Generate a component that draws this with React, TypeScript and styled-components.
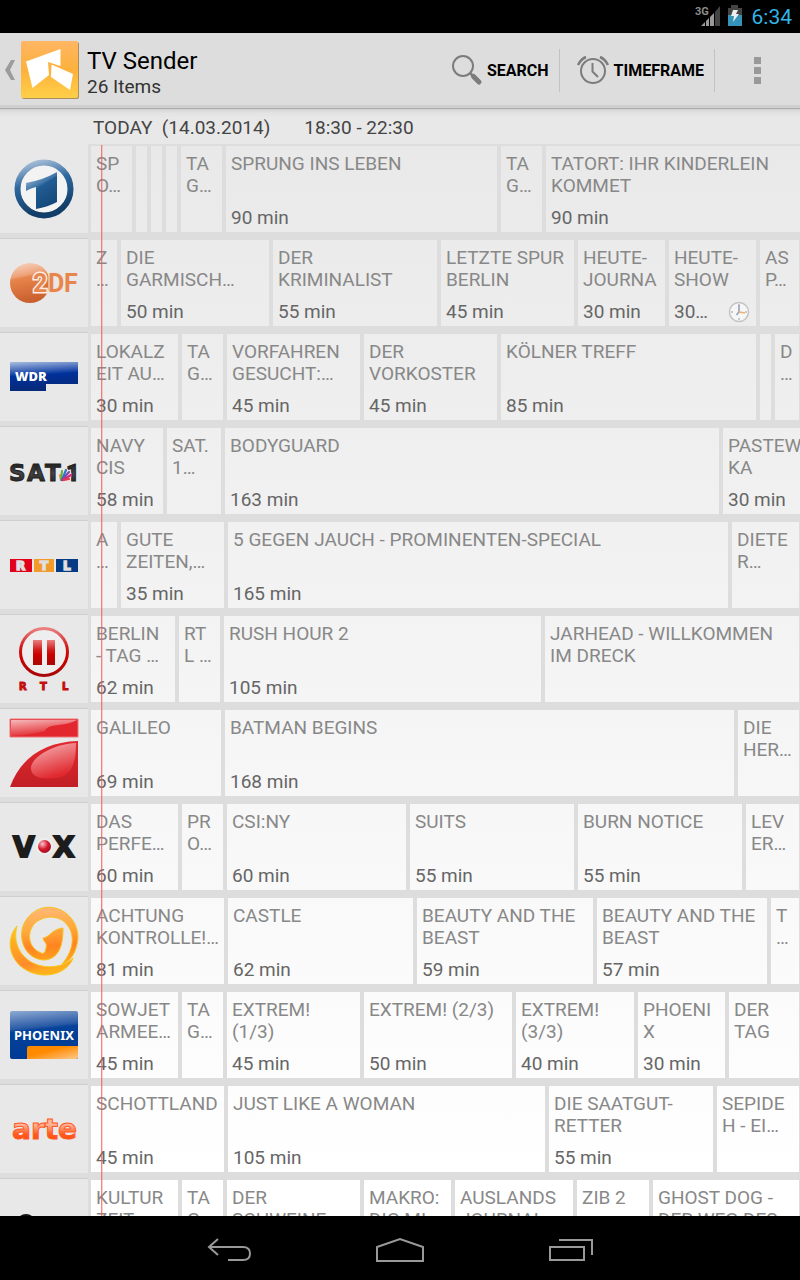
import React from "react";
import styled, { createGlobalStyle } from "styled-components";

const GlobalStyle = createGlobalStyle`
  * { box-sizing: border-box; }
  body { margin: 0; background: #000; font-family: Roboto, "Liberation Sans", sans-serif; }
  button { font: inherit; color: inherit; background: none; border: 0; margin: 0; padding: 0; }
  svg { display: block; flex: none; }
`;

const Screen = styled.div`
  display: flex;
  flex-direction: column;
  height: 100vh;
  overflow: hidden;
`;

const StatusBar = styled.div`
  display: flex;
  flex: none;
  align-items: center;
  justify-content: flex-end;
  height: 33px;
  padding-right: 8px;
  background: #000;
`;

const StatusTime = styled.span`
  margin-left: 9px;
  color: #33b5e5;
  font-size: 21px;
  line-height: 33px;
  padding-top: 2px;
`;

const ActionBar = styled.header`
  display: flex;
  flex: none;
  align-items: center;
  height: 76px;
  padding-bottom: 2px;
  background: linear-gradient(#ddd 72px, #d0d0d0 72px, #d0d0d0 75px, #acacac 75px);
`;

const UpButton = styled.button`
  display: flex;
  align-items: center;
  gap: 6px;
  padding-left: 5px;
`;

const Heading = styled.div`
  flex: 1;
  padding: 5px 0 0 8px;
`;

const Title = styled.h1`
  margin: 0;
  color: #000;
  font-size: 24px;
  font-weight: 400;
  line-height: 28px;
`;

const Subtitle = styled.div`
  color: #333;
  font-size: 19px;
  line-height: 24px;
`;

const ActionButton = styled.button`
  display: flex;
  align-items: center;
  gap: 4px;
  height: 43px;
  padding: 0 10px 0 16px;
  border-right: 1px solid #c2c2c2;
  color: #000;
  font-size: 16px;
  font-weight: 700;
`;

const OverflowButton = styled.button`
  display: flex;
  flex-direction: column;
  align-items: center;
  gap: 3px;
  width: 85px;
`;

const OverflowDot = styled.span`
  width: 7px;
  height: 7px;
  background: #999;
`;

const Guide = styled.main`
  flex: 1;
  min-height: 0;
  overflow: hidden;
  background: #e8e8e8;
`;

const RangeBar = styled.div`
  display: flex;
  gap: 34px;
  height: 35px;
  padding-left: 93px;
  background: linear-gradient(#d2d2d2, #e3e3e3 4px, #e8e8e8 9px);
  color: #444;
  font-size: 19px;
  line-height: 37px;
  white-space: pre;
`;

const Channels = styled.div`
  position: relative;
  background: linear-gradient(#e9e9e9, #fff 1040px);
`;

const NowLine = styled.div`
  position: absolute;
  top: 1px;
  bottom: 0;
  left: 101px;
  width: 2px;
  background: linear-gradient(90deg, rgba(240, 80, 80, 0.7) 1px, rgba(240, 110, 110, 0.3) 1px);
`;

const ChannelRow = styled.section`
  display: flex;
  height: 94px;
  overflow: hidden;
`;

const ChannelLogo = styled.div<{ $first?: boolean }>`
  flex: none;
  width: 88px;
  border-top: 1px solid ${(p) => (p.$first ? "#e8e8e8" : "#cfcfcf")};
  border-bottom: 5px solid #ddd;
  background: #e8e8e8;
`;

const Programmes = styled.div`
  display: flex;
  flex: 1;
  min-width: 0;
  overflow: hidden;
  border: solid #ddd;
  border-width: 2px 0 6px 3px;
`;

const Programme = styled.article<{ $width: number }>`
  display: flex;
  flex: none;
  flex-direction: column;
  justify-content: space-between;
  width: ${(p) => p.$width + 4}px;
  padding: 7px 0 3px 5px;
  border-right: 4px solid #ddd;
  overflow: hidden;
  font-size: 19px;
  line-height: 22px;
  white-space: pre;
`;

const ProgrammeTitle = styled.div`
  color: #888;
`;

const ProgrammeFooter = styled.div`
  display: flex;
  justify-content: space-between;
  padding-right: 6px;
  color: #666;
`;

const NavBar = styled.nav`
  display: flex;
  flex: none;
  align-items: center;
  justify-content: center;
  gap: 123px;
  height: 64px;
  padding-top: 4px;
  background: #000;
`;

type Show = [width: number, title?: string, duration?: string, reminder?: boolean];
type Channel = { name: string; logo: React.ReactNode; shows: Show[] };

const Logo = ({ label, children }: { label: string; children: React.ReactNode }) => (
  <svg width="88" height="88" viewBox="0 0 88 88" role="img" aria-label={label}>
    {children}
  </svg>
);

const wide = { fontFamily: '"DejaVu Sans", sans-serif', fontWeight: 700 };

const ArdLogo = (
  <Logo label="Das Erste">
    <defs>
      <linearGradient id="ard" x1="0" y1="0" x2="0.25" y2="1">
        <stop offset="0" stopColor="#b4c8dc" />
        <stop offset="0.45" stopColor="#2d689f" />
        <stop offset="1" stopColor="#123d68" />
      </linearGradient>
      <linearGradient id="ardOne" x1="0" y1="0" x2="0.5" y2="1">
        <stop offset="0" stopColor="#c4d4e4" />
        <stop offset="0.45" stopColor="#3d74a6" />
        <stop offset="0.5" stopColor="#215c94" />
        <stop offset="1" stopColor="#164a7c" />
      </linearGradient>
    </defs>
    <circle cx="44" cy="44" r="26.5" fill="#f3f3f3" stroke="url(#ard)" strokeWidth="6" />
    <path d="M26 38Q43 35 57 27V57Q48 62 36 64V42Q31 43 26 46Z" fill="url(#ardOne)" />
  </Logo>
);

const ZdfLogo = (
  <Logo label="ZDF">
    <defs>
      <linearGradient id="zdf" x1="0" y1="0" x2="0.2" y2="1">
        <stop offset="0" stopColor="#f8d8c4" />
        <stop offset="0.36" stopColor="#eea27a" />
        <stop offset="0.42" stopColor="#e8854c" />
        <stop offset="1" stopColor="#c9602e" />
      </linearGradient>
    </defs>
    <circle cx="30" cy="44" r="20" fill="url(#zdf)" />
    <g fontFamily="Roboto, sans-serif" fontWeight="700" fontSize="25">
      <text x="33" y="53" fill="#e8854c" stroke="#f8ece4" strokeWidth="3" paintOrder="stroke">2</text>
      <text x="48" y="53" fill="#e8854c" stroke="#f2e4da" strokeWidth="2" paintOrder="stroke">D</text>
      <text x="64" y="53" fill="#e8854c">F</text>
    </g>
  </Logo>
);

const WdrLogo = (
  <Logo label="WDR">
    <defs>
      <linearGradient id="wdr" x1="0" y1="0" x2="0.15" y2="1">
        <stop offset="0" stopColor="#a9bde2" />
        <stop offset="0.42" stopColor="#1d49a8" />
        <stop offset="0.5" stopColor="#00309a" />
        <stop offset="1" stopColor="#062a78" />
      </linearGradient>
    </defs>
    <path d="M10 29H78V51H46V58H10Z" fill="url(#wdr)" />
    <text x="15" y="48" fill="#fff" fontFamily="Open Sans, sans-serif" fontWeight="800" fontSize="13">WDR</text>
  </Logo>
);

const SatLogo = (
  <Logo label="SAT.1">
    <defs>
      <linearGradient id="sat" x1="0" y1="0" x2="0" y2="1">
        <stop offset="0" stopColor="#111" />
        <stop offset="0.5" stopColor="#444" />
        <stop offset="1" stopColor="#1a1a1a" />
      </linearGradient>
    </defs>
    <g {...wide} fontSize="23" fill="url(#sat)" stroke="#222" strokeWidth="1">
      <text x="9" y="54">S</text>
      <text x="27" y="54">A</text>
      <text x="45" y="54">T</text>
      <text x="66" y="54" fontFamily="Roboto, sans-serif" fontWeight="900">1</text>
    </g>
    <circle cx="65" cy="48" r="6.5" fill="#f1e8ee" />
    <g strokeWidth="2.2" strokeLinecap="round">
      <path d="M61 53L60 48" stroke="#f2992c" />
      <path d="M61 53L62 44" stroke="#62b23c" />
      <path d="M62 53L66 43" stroke="#3178c0" />
      <path d="M62 53L69 45" stroke="#7a4bb0" />
      <path d="M63 53L71 48" stroke="#d02a7a" />
      <path d="M64 53L69 52" stroke="#e33b4c" />
    </g>
  </Logo>
);

const RtlLogo = (
  <Logo label="RTL">
    <rect x="10" y="38" width="22" height="13" fill="#e2001a" />
    <rect x="34" y="38" width="20" height="13" fill="#f39a2b" />
    <rect x="56" y="38" width="22" height="13" fill="#063a84" />
    <g {...wide} fontSize="12" fill="#eee" stroke="#ddd" strokeWidth="1.5">
      <text x="16" y="49">R</text>
      <text x="40" y="49">T</text>
      <text x="63" y="49">L</text>
    </g>
  </Logo>
);

const Rtl2Logo = (
  <Logo label="RTL II">
    <defs>
      <linearGradient id="rtl2" x1="0" y1="0" x2="0" y2="1">
        <stop offset="0" stopColor="#ea8080" />
        <stop offset="0.4" stopColor="#d01a1a" />
        <stop offset="0.6" stopColor="#cc0000" />
        <stop offset="1" stopColor="#a80808" />
      </linearGradient>
    </defs>
    <circle cx="44" cy="37" r="23.5" fill="#eee" stroke="url(#rtl2)" strokeWidth="3" />
    <path d="M33 25H42V50H33ZM47 25H55V50H47Z" fill="url(#rtl2)" />
    <g {...wide} fontSize="10" fill="#c40d0d" stroke="#c40d0d" strokeWidth="1">
      <text x="19" y="75">R</text>
      <text x="40" y="75">T</text>
      <text x="62" y="75">L</text>
    </g>
  </Logo>
);

const ProSiebenLogo = (
  <Logo label="ProSieben">
    <defs>
      <linearGradient id="pro7" x1="0" y1="0" x2="0.4" y2="1">
        <stop offset="0" stopColor="#f7b9bb" />
        <stop offset="1" stopColor="#e0282e" />
      </linearGradient>
      <linearGradient id="pro7b" x1="0" y1="0" x2="0" y2="1">
        <stop offset="0" stopColor="#e2282e" />
        <stop offset="1" stopColor="#c21f26" />
      </linearGradient>
    </defs>
    <path d="M10 10H78V28H10Z" fill="#e2282e" stroke="#e77" strokeWidth="1" />
    <path d="M11 11H77Q70 15 58 16Q46 17 45 22Q30 26 11 27Z" fill="url(#pro7)" />
    <path d="M10 78C20 50 43 33 78 32V78Z" fill="url(#pro7b)" />
    <path d="M76 34C52 35 30 49 31 60C32 70 45 70 56 69C72 67 76 54 76 34Z" fill="url(#pro7)" />
  </Logo>
);

const VoxLogo = (
  <Logo label="VOX">
    <defs>
      <radialGradient id="vox" cx="0.35" cy="0.3" r="0.7">
        <stop offset="0" stopColor="#f7c6cc" />
        <stop offset="0.6" stopColor="#d8182e" />
        <stop offset="1" stopColor="#a80f22" />
      </radialGradient>
    </defs>
    <g {...wide} fontSize="28" fill="#1c1c1c" stroke="#1c1c1c" strokeWidth="2">
      <text x="13" y="54">V</text>
      <text x="53" y="54">X</text>
    </g>
    <circle cx="44.5" cy="43.5" r="8.5" fill="#eee" />
    <circle cx="44.5" cy="43.5" r="6.5" fill="url(#vox)" />
  </Logo>
);

const KabelLogo = (
  <Logo label="kabel eins">
    <defs>
      <linearGradient id="kabel" x1="0" y1="0" x2="0.3" y2="1">
        <stop offset="0" stopColor="#ffc81c" />
        <stop offset="0.5" stopColor="#ffa024" />
        <stop offset="0.8" stopColor="#ff8a2c" />
        <stop offset="1" stopColor="#ffb01c" />
      </linearGradient>
      <linearGradient id="kabelOne" x1="0.3" y1="0" x2="0.4" y2="1">
        <stop offset="0" stopColor="#ffb878" />
        <stop offset="0.4" stopColor="#ffaa3c" />
        <stop offset="0.7" stopColor="#ff8420" />
        <stop offset="1" stopColor="#ffa81c" />
      </linearGradient>
    </defs>
    <path d="M17 29C5 43 10 62 23 71C41 84 67 78 73 61C63 71 45 72 33 66C18 58 13 43 17 29Z" fill="url(#kabel)" stroke="#f8c81c" strokeWidth="1" />
    <path d="M45 63C27 63 18 45 23 29C29 14 43 8 55 11C72 15 81 33 77 47C75 58 69 65 62 67C72 56 76 40 68 29C60 17 43 18 34 27C27 36 28 49 39 55Q43 58 45 55C46 50 48 48 44 44L43 41C50 40 52 32 63 31C63 45 61 61 45 63Z" fill="url(#kabelOne)" stroke="#f8c020" strokeWidth="1" />
  </Logo>
);

const PhoenixLogo = (
  <Logo label="Phoenix">
    <defs>
      <linearGradient id="phoenix" x1="0" y1="0" x2="0.15" y2="1">
        <stop offset="0" stopColor="#8eaad2" />
        <stop offset="0.38" stopColor="#2a5aa6" />
        <stop offset="0.44" stopColor="#05429a" />
        <stop offset="1" stopColor="#003a94" />
      </linearGradient>
      <linearGradient id="phoenixBar" x1="0" y1="0" x2="1" y2="1">
        <stop offset="0.4" stopColor="#ff8a00" />
        <stop offset="1" stopColor="#ffc98c" />
      </linearGradient>
    </defs>
    <rect x="10" y="20" width="68" height="48" rx="2" fill="url(#phoenix)" />
    <path d="M27 57Q27 55 29 55H78V66Q78 68 76 68H27Z" fill="url(#phoenixBar)" />
    <text x="14" y="49" fill="#fff" fontFamily="Noto Sans, sans-serif" fontWeight="700" fontSize="13">PHOENIX</text>
  </Logo>
);

const ArteLogo = (
  <Logo label="arte">
    <defs>
      <linearGradient id="arte" x1="0" y1="0" x2="0" y2="1">
        <stop offset="0.35" stopColor="#ffb49a" />
        <stop offset="0.65" stopColor="#ff5a1c" />
        <stop offset="1" stopColor="#ff4400" />
      </linearGradient>
    </defs>
    <text x="12" y="54" {...wide} fontSize="28" fill="url(#arte)" stroke="#ff5a24" strokeWidth="1">arte</text>
  </Logo>
);

const DreiSatLogo = (
  <Logo label="3sat">
    <circle cx="26" cy="45" r="10" fill="#111" />
  </Logo>
);

const channels: Channel[] = [
  {
    name: "Das Erste",
    logo: ArdLogo,
    shows: [[41, "SP\nO…"], [11], [11], [11], [41, "TA\nG…"], [271, "SPRUNG INS LEBEN", "90 min"], [41, "TA\nG…"], [271, "TATORT: IHR KINDERLEIN\nKOMMET", "90 min"]],
  },
  {
    name: "ZDF",
    logo: ZdfLogo,
    shows: [[26, "Z\n…"], [148, "DIE\nGARMISCH…", "50 min"], [164, "DER\nKRIMINALIST", "55 min"], [133, "LETZTE SPUR\nBERLIN", "45 min"], [87, "HEUTE-\nJOURNA", "30 min"], [87, "HEUTE-\nSHOW", "30…", true], [39, "AS\nP…"]],
  },
  {
    name: "WDR",
    logo: WdrLogo,
    shows: [[87, "LOKALZ\nEIT AU…", "30 min"], [41, "TA\nG…"], [133, "VORFAHREN\nGESUCHT:…", "45 min"], [133, "DER\nVORKOSTER", "45 min"], [255, "KÖLNER TREFF", "85 min"], [11], [24, "D\n…"]],
  },
  {
    name: "SAT.1",
    logo: SatLogo,
    shows: [[72, "NAVY\nCIS", "58 min"], [54, "SAT.\n1…"], [494, "BODYGUARD", "163 min"], [87, "PASTEW\nKA", "30 min"]],
  },
  {
    name: "RTL",
    logo: RtlLogo,
    shows: [[26, "A\n…"], [103, "GUTE\nZEITEN,…", "35 min"], [500, "5 GEGEN JAUCH - PROMINENTEN-SPECIAL", "165 min"], [67, "DIETE\nR…"]],
  },
  {
    name: "RTL II",
    logo: Rtl2Logo,
    shows: [[84, "BERLIN\n- TAG …", "62 min"], [41, "RT\nL …"], [317, "RUSH HOUR 2", "105 min"], [254, "JARHEAD - WILLKOMMEN\nIM DRECK"]],
  },
  {
    name: "ProSieben",
    logo: ProSiebenLogo,
    shows: [[130, "GALILEO", "69 min"], [509, "BATMAN BEGINS", "168 min"], [61, "DIE\nHER…"]],
  },
  {
    name: "VOX",
    logo: VoxLogo,
    shows: [[87, "DAS\nPERFE…", "60 min"], [41, "PR\nO…"], [179, "CSI:NY", "60 min"], [164, "SUITS", "55 min"], [164, "BURN NOTICE", "55 min"], [53, "LEV\nER…"]],
  },
  {
    name: "kabel eins",
    logo: KabelLogo,
    shows: [[133, "ACHTUNG\nKONTROLLE!…", "81 min"], [185, "CASTLE", "62 min"], [176, "BEAUTY AND THE\nBEAST", "59 min"], [170, "BEAUTY AND THE\nBEAST", "57 min"], [28, "T\n…"]],
  },
  {
    name: "Phoenix",
    logo: PhoenixLogo,
    shows: [[87, "SOWJET\nARMEE…", "45 min"], [41, "TA\nG…"], [133, "EXTREM!\n(1/3)", "45 min"], [148, "EXTREM! (2/3)", "50 min"], [118, "EXTREM!\n(3/3)", "40 min"], [87, "PHOENI\nX", "30 min"], [70, "DER\nTAG"]],
  },
  {
    name: "arte",
    logo: ArteLogo,
    shows: [[133, "SCHOTTLAND", "45 min"], [317, "JUST LIKE A WOMAN", "105 min"], [164, "DIE SAATGUT-\nRETTER", "55 min"], [82, "SEPIDE\nH - EI…"]],
  },
  {
    name: "3sat",
    logo: DreiSatLogo,
    shows: [[87, "KULTUR\nZEIT"], [41, "TA\nG…"], [133, "DER\nSCHWEINE"], [87, "MAKRO:\nDIG MI…"], [118, "AUSLANDS\nJOURNAL"], [72, "ZIB 2"], [146, "GHOST DOG -\nDER WEG DES"]],
  },
];

const ReminderIcon = () => (
  <svg width="22" height="22" viewBox="0 0 22 22" aria-label="Reminder set">
    <circle cx="11" cy="11" r="9.5" fill="#f6f6f6" stroke="#c4c4c4" strokeWidth="1.5" />
    <path d="M11 3V5M11 17V19M3 11H5M17 11H19" stroke="#bbb" strokeWidth="1.5" />
    <path d="M11 4V11L8.5 14" fill="none" stroke="#8f9db5" strokeWidth="1.5" />
    <path d="M11 11L17 12" stroke="#f0b070" strokeWidth="1.3" />
  </svg>
);

export default function App() {
  return (
    <Screen>
      <GlobalStyle />
      <StatusBar>
        <svg width="48" height="33" viewBox="0 0 48 33" aria-label="3G signal, battery charging">
          <text x="0" y="15" fill="#8c8c8c" fontFamily="Roboto, sans-serif" fontWeight="700" fontSize="11">3G</text>
          <path d="M6 26L10 22V26ZM11 26V21L14 18V26ZM15 26V17L19 13V26Z" fill="#9a9a9a" />
          <path d="M20 26V12L25 6V26Z" fill="#444" />
          <path d="M33 8H36V5H43V8H47V15H33Z" fill="#444" />
          <path d="M33 15H47V26H33Z" fill="#3592b8" />
          <path d="M38 10H43L41 14H44L38 22L39 16H36Z" fill="#eee" />
        </svg>
        <StatusTime>6:34</StatusTime>
      </StatusBar>
      <ActionBar>
        <UpButton aria-label="Navigate up">
          <svg width="10" height="20" viewBox="0 0 10 20">
            <path d="M10 0L5 10L10 20H6L0 10L6 0Z" fill="#9c9c9c" />
          </svg>
          <svg width="58" height="58" viewBox="0 0 58 58">
            <defs>
              <linearGradient id="app" x1="0" y1="0" x2="0" y2="1">
                <stop offset="0" stopColor="#ffb663" />
                <stop offset="0.5" stopColor="#fdb13c" />
                <stop offset="1" stopColor="#ffcf48" />
              </linearGradient>
            </defs>
            <rect x="1" y="1" width="57" height="57" rx="2" fill="#a98f60" />
            <rect x="0" y="0" width="57" height="57" rx="2" fill="url(#app)" />
            <path d="M5 20.5L39.5 8V25L27 21L28 34L11.5 47Z" fill="#fff" />
            <path d="M30.5 23.5L52 33L49 49L30 36Z" fill="#fff" />
          </svg>
        </UpButton>
        <Heading>
          <Title>TV Sender</Title>
          <Subtitle>26 Items</Subtitle>
        </Heading>
        <ActionButton>
          <svg width="32" height="32" viewBox="0 0 32 32" fill="none" stroke="#7c7c7c">
            <circle cx="12" cy="12" r="10" strokeWidth="2" />
            <path d="M19 19L23 23" strokeWidth="2.5" />
            <path d="M22.5 22.5L28 28" strokeWidth="5" strokeLinecap="round" />
          </svg>
          SEARCH
        </ActionButton>
        <ActionButton>
          <svg width="34" height="34" viewBox="0 0 34 34" fill="none" stroke="#7c7c7c">
            <circle cx="17" cy="18" r="12" strokeWidth="2" />
            <path d="M16.5 10V18.5L22 24" strokeWidth="2" />
            <path d="M2 12Q5 6 10 4M32 12Q29 6 24 4" strokeWidth="2.5" />
          </svg>
          TIMEFRAME
        </ActionButton>
        <OverflowButton aria-label="More options">
          <OverflowDot />
          <OverflowDot />
          <OverflowDot />
        </OverflowButton>
      </ActionBar>
      <Guide>
        <RangeBar>
          <span>{"TODAY  (14.03.2014)"}</span>
          <span>18:30 - 22:30</span>
        </RangeBar>
        <Channels>
          {channels.map((channel, row) => (
            <ChannelRow key={channel.name}>
              <ChannelLogo $first={row === 0}>{channel.logo}</ChannelLogo>
              <Programmes>
                {channel.shows.map(([width, title, duration, reminder], i) => (
                  <Programme key={i} $width={width}>
                    <ProgrammeTitle>{title}</ProgrammeTitle>
                    <ProgrammeFooter>
                      {duration}
                      {reminder && <ReminderIcon />}
                    </ProgrammeFooter>
                  </Programme>
                ))}
              </Programmes>
            </ChannelRow>
          ))}
          <NowLine />
        </Channels>
      </Guide>
      <NavBar>
        <button aria-label="Back">
          <svg width="46" height="26" viewBox="0 0 46 26" fill="none" stroke="#999" strokeWidth="2">
            <path d="M12 2L3 10L12 18M3 10H37Q44 10 44 16.5Q44 23 37 23H22" />
          </svg>
        </button>
        <button aria-label="Home">
          <svg width="50" height="26" viewBox="0 0 50 26" fill="none" stroke="#999" strokeWidth="2">
            <path d="M2 24V10L25 2L48 10V24Z" />
          </svg>
        </button>
        <button aria-label="Recent apps">
          <svg width="46" height="26" viewBox="0 0 46 26" fill="none" stroke="#999" strokeWidth="2">
            <path d="M2 10H36V23H2ZM11 3H44V18" />
          </svg>
        </button>
      </NavBar>
    </Screen>
  );
}
